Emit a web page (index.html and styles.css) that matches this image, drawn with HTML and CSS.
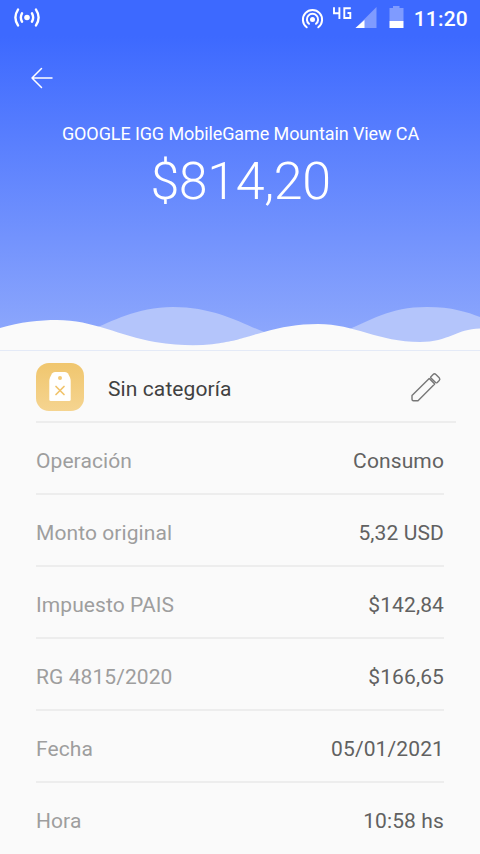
FILE: index.html
```html
<!DOCTYPE html>
<html lang="es">
<head>
<meta charset="utf-8">
<meta name="viewport" content="width=device-width">
<title>Consumo</title>
<link rel="stylesheet" href="styles.css">
</head>
<body>
<header class="hero">
  <div class="status">
    <svg class="cast" width="28" height="22" viewBox="0 0 28 22" fill="none" stroke="#fff" stroke-width="2.4" stroke-linecap="round">
      <circle cx="14" cy="10.5" r="2.8" fill="#fff" stroke="none"/>
      <path d="M9 6.3Q6.7 10.5 9 14.7M19 6.3Q21.3 10.5 19 14.7M5 2.6Q-.2 10.5 5 18.4M23 2.6Q28.2 10.5 23 18.4"/>
    </svg>
    <div class="indicators">
      <svg width="108" height="30" viewBox="0 0 108 30" fill="none">
        <g stroke="#fff" stroke-width="2" stroke-linecap="round">
          <path d="M5.700 27.300A9.600 9.600 0 1 1 17.300 27.300M8 23.800A5.600 5.600 0 1 1 15 23.800"/>
        </g>
        <circle cx="11.500" cy="19.500" r="2.500" fill="#fff"/>
        <path d="M33 7.200V13.300H39M38.400 7.200V19M49.800 8.300H43.300V18H49.300V13H46.500" stroke="#fff" stroke-width="1.900"/>
        <path d="M54.500 28L75.500 7V28Z" fill="#7f9bff"/>
        <path d="M54.500 28L63.500 20V28Z" fill="#fff"/>
        <path d="M88.500 8H92V6H98.500V8H102.500V21H88.500Z" fill="#7f9bff"/>
        <path d="M88.500 21H102.500V28H88.500Z" fill="#fff"/>
      </svg>
      <span class="clock">11:20</span>
    </div>
  </div>
  <svg class="back" width="24" height="24" viewBox="0 0 24 24" fill="none" stroke="#fff" stroke-width="1.5" stroke-linecap="round" stroke-linejoin="round"><path d="M11.500 2.500L2 12L11.500 21.500M2 12H22"/></svg>
  <h1 class="merchant">GOOGLE IGG MobileGame Mountain View CA</h1>
  <p class="amount">$814,20</p>
  <svg class="waves" width="480" height="50" viewBox="0 300 480 50">
    <path d="M90 330C112 322 136 307 173 307C216 307 242 324 267 333L190 350ZM345 331C370 321 389 307 427 307C452 307 467 312 480 317V350H400Z" fill="#b4c5fb"/>
    <path d="M0 328C20 322 40 320 57 320C93 320 120 336 155 342C212 351 238 339 264 332C281 327 298 324 318 324C355 324 378 342 420 342C449 342 456 329 480 328.500V350H0Z" fill="#fafafa"/>
  </svg>
</header>
<main class="details">
  <div class="category">
    <svg class="tag" width="48" height="48" viewBox="0 0 48 48">
      <defs><linearGradient id="gold" x2="0" y2="1"><stop stop-color="#f0c66e"/><stop offset="1" stop-color="#f5d490"/></linearGradient></defs>
      <rect width="48" height="48" rx="13" fill="url(#gold)"/>
      <path d="M19 9H29Q31 9 32 10.500L34 14.500Q34.700 16 34.700 18V36.500Q34.700 38 33.200 38H14.800Q13.300 38 13.300 36.500V18Q13.300 16 14 14.500L16 10.500Q17 9 19 9Z" fill="#fff"/>
      <circle cx="24" cy="15" r="2" fill="#f2ca78"/>
      <path d="M20 23.500L28 31.500M28 23.500L20 31.500" stroke="#f0c36c" stroke-width="1.700" stroke-linecap="round"/>
    </svg>
    <span class="category-name">Sin categoría</span>
    <svg class="edit" width="32" height="32" viewBox="0 0 32 32" fill="none" stroke="#777" stroke-width="1.400" stroke-linejoin="round"><path d="M2 24.500L19.200 7.400L24.700 13L8 29.700H3.500Q2 29.700 2 28.200ZM20.700 5.900L23.100 3.500Q24.500 2.200 25.900 3.500L29.200 6.800Q30.500 8.200 29.200 9.600L27.300 11.500Q26.300 12.300 25.300 11.300L20.700 6.700Z"/></svg>
  </div>
  <dl class="rows">
    <div class="row"><dt>Operación</dt><dd>Consumo</dd></div>
    <div class="row"><dt>Monto original</dt><dd>5,32 USD</dd></div>
    <div class="row"><dt>Impuesto PAIS</dt><dd>$142,84</dd></div>
    <div class="row"><dt>RG 4815/2020</dt><dd>$166,65</dd></div>
    <div class="row"><dt>Fecha</dt><dd>05/01/2021</dd></div>
    <div class="row"><dt>Hora</dt><dd>10:58 hs</dd></div>
  </dl>
</main>
</body>
</html>
```
FILE: styles.css
```css
* { box-sizing: border-box; }
body {
  margin: 0;
  height: 854px;
  overflow: hidden;
  background: #fafafa;
  font-family: Roboto, "Liberation Sans", sans-serif;
}
.hero {
  display: flex;
  flex-direction: column;
  height: 350px;
  background: linear-gradient(#3d69ff 0, #3d69ff 36px, #8ea8fc 340px);
  color: #fff;
}
.status {
  display: flex;
  justify-content: space-between;
  height: 36px;
  padding: 0 12px 0 13px;
}
.cast { margin-top: 7px; }
.indicators { display: flex; gap: 5px; }
.clock {
  font-size: 21px;
  font-weight: 500;
  line-height: 38px;
  letter-spacing: 0.2px;
}
.back { margin: 30px 0 0 30px; }
.merchant {
  margin: 32px 0 0 1px;
  font-size: 18px;
  font-weight: 400;
  line-height: 24px;
  letter-spacing: -0.1px;
  text-align: center;
}
.amount {
  margin: 6px 0 0 1px;
  font-size: 52px;
  font-weight: 300;
  line-height: 60px;
  letter-spacing: -0.4px;
  text-align: center;
}
.waves { display: block; margin-top: auto; }
.details { border-top: 1px solid #e4eaf7; }
.category {
  display: flex;
  align-items: center;
  height: 72px;
  margin: 0 24px 0 36px;
  padding-right: 14px;
  border-bottom: 2px solid #ededed;
}
.tag { margin-top: 2px; }
.category-name {
  margin: 6px auto 0 24px;
  color: #414141;
  font-size: 21px;
  letter-spacing: 0.1px;
}
.edit { margin-top: 2px; }
.rows { margin: 0 36px; }
.row {
  display: flex;
  justify-content: space-between;
  height: 72px;
  padding-top: 6px;
  border-bottom: 2px solid #ededed;
  font-size: 21px;
  line-height: 64px;
}
.row:last-child { border-bottom: 0; }
.row dt { color: #9e9e9e; letter-spacing: 0.08px; }
.row dd { margin: 0; color: #616161; letter-spacing: 0.12px; }
```
